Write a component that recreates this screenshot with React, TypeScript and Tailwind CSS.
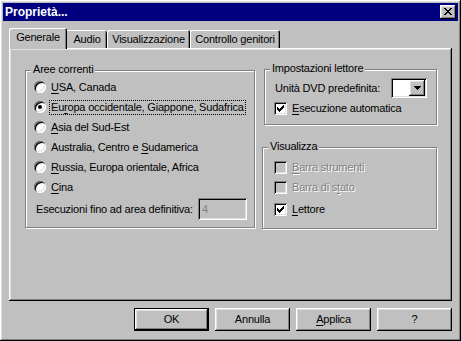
import React from 'react';

const raised =
  'shadow-[inset_-1px_-1px_#000,inset_1px_1px_#fff,inset_-2px_-2px_#808080,inset_2px_2px_#dfdfdf]';
const sunken =
  'shadow-[inset_1px_1px_#808080,inset_-1px_-1px_#fff,inset_2px_2px_#000,inset_-2px_-2px_#dfdfdf]';
const groupBox =
  'relative border border-[#808080] shadow-[1px_1px_0_#fff,inset_1px_1px_0_#fff]';
const disabledText = 'text-[#808080] [text-shadow:1px_1px_0_#fff]';

const Ul: React.FC<{ children: React.ReactNode }> = ({ children }) => (
  <span className="underline underline-offset-[2px]">{children}</span>
);

const Radio: React.FC<{ checked?: boolean }> = ({ checked }) => (
  <div className={`w-[12px] h-[12px] rounded-full bg-white flex items-center justify-center shrink-0 ${sunken}`}>
    {checked && <div className="w-[4px] h-[4px] rounded-full bg-black" />}
  </div>
);

const CheckMark = () => (
  <svg width="7" height="7" viewBox="0 0 7 7" shapeRendering="crispEdges">
    <rect x="0" y="2" width="1" height="3" fill="#000" />
    <rect x="1" y="3" width="1" height="3" fill="#000" />
    <rect x="2" y="4" width="1" height="3" fill="#000" />
    <rect x="3" y="3" width="1" height="3" fill="#000" />
    <rect x="4" y="2" width="1" height="3" fill="#000" />
    <rect x="5" y="1" width="1" height="3" fill="#000" />
    <rect x="6" y="0" width="1" height="3" fill="#000" />
  </svg>
);

const Checkbox: React.FC<{ checked?: boolean; disabled?: boolean }> = ({ checked, disabled }) => (
  <div
    className={`w-[13px] h-[13px] flex items-center justify-center shrink-0 ${sunken} ${
      disabled ? 'bg-[#c0c0c0]' : 'bg-white'
    }`}
  >
    {checked && <CheckMark />}
  </div>
);

const RadioRow: React.FC<{ checked?: boolean; focused?: boolean; children: React.ReactNode }> = ({
  checked,
  focused,
  children,
}) => (
  <div className="h-[20px] flex items-center">
    <Radio checked={checked} />
    <span
      className={`ml-[4px] px-[1px] leading-[13px] ${
        focused ? 'outline outline-1 outline-dotted outline-black' : ''
      }`}
    >
      {children}
    </span>
  </div>
);

const CheckRow: React.FC<{ checked?: boolean; disabled?: boolean; children: React.ReactNode }> = ({
  checked,
  disabled,
  children,
}) => (
  <div className="h-[20px] flex items-center">
    <Checkbox checked={checked} disabled={disabled} />
    <span className={`ml-[5px] ${disabled ? disabledText : ''}`}>{children}</span>
  </div>
);

const Legend: React.FC<{ children: React.ReactNode }> = ({ children }) => (
  <span className="absolute left-[5px] top-[-8px] px-[2px] bg-[#c0c0c0] leading-[13px]">{children}</span>
);

const Button: React.FC<{ isDefault?: boolean; children: React.ReactNode }> = ({ isDefault, children }) => (
  <div className={`w-[75px] h-[23px] ${isDefault ? 'border border-black' : ''}`}>
    <div className={`w-full h-full flex items-center justify-center ${raised}`}>{children}</div>
  </div>
);

export default function App() {
  return (
    <div
      className={`w-[461px] h-[341px] bg-[#c0c0c0] p-[3px] flex flex-col text-[11px] text-black whitespace-nowrap tracking-[-0.2px] ${raised}`}
      style={{ fontFamily: '"Liberation Sans", Arial, sans-serif' }}
    >
      {/* title bar */}
      <div className="h-[18px] bg-[#000080] flex items-center justify-between pl-[2px] pr-[2px]">
        <span className="text-white font-bold text-[12px] tracking-normal">Proprietà...</span>
        <div className={`w-[16px] h-[14px] bg-[#c0c0c0] flex items-center justify-center ${raised}`}>
          <svg width="8" height="7" viewBox="0 0 8 7" shapeRendering="crispEdges" className="-mt-[1px]">
            <path d="M0 0h2v1h-2zM6 0h2v1h-2zM1 1h2v1h-2zM5 1h2v1h-2zM2 2h4v1h-4zM3 3h2v1h-2zM2 4h4v1h-4zM1 5h2v1h-2zM5 5h2v1h-2zM0 6h2v1h-2zM6 6h2v1h-2z" fill="#000" />
          </svg>
        </div>
      </div>

      {/* tabs */}
      <div className="mt-[7px] pl-[6px] h-[20px] flex items-end">
        <div className="relative z-10 w-[58px] h-[21px] -mb-[1px] bg-[#c0c0c0] rounded-tl-[2px] rounded-tr-[2px] shadow-[inset_1px_1px_#fff,inset_-1px_0_#000,inset_-2px_0_#808080] flex items-center justify-center pb-[3px]">
          Generale
        </div>
        <div className="w-[40px] h-[18px] rounded-tr-[2px] shadow-[inset_0_1px_#fff,inset_-1px_0_#000,inset_-2px_0_#808080] flex items-center justify-center">
          Audio
        </div>
        <div className="w-[83px] h-[18px] rounded-t-[2px] shadow-[inset_1px_1px_#fff,inset_-1px_0_#000,inset_-2px_0_#808080] flex items-center justify-center">
          Visualizzazione
        </div>
        <div className="w-[90px] h-[18px] rounded-t-[2px] shadow-[inset_1px_1px_#fff,inset_-1px_0_#000,inset_-2px_0_#808080] flex items-center justify-center">
          Controllo genitori
        </div>
      </div>

      {/* panel */}
      <div className={`ml-[6px] w-[443px] h-[253px] flex pl-[16px] pt-[22px] ${raised}`}>
        <div className={`${groupBox} w-[230px] h-[158px] pl-[8px] pt-[6px] pr-[7px]`}>
          <Legend>Aree correnti</Legend>
          <RadioRow>
            <Ul>U</Ul>SA, Canada
          </RadioRow>
          <RadioRow checked focused>
            Eu<Ul>r</Ul>opa occidentale, Giappone, Sudafrica
          </RadioRow>
          <RadioRow>
            <Ul>A</Ul>sia del Sud-Est
          </RadioRow>
          <RadioRow>
            Australia, Centro e <Ul>S</Ul>udamerica
          </RadioRow>
          <RadioRow>
            <Ul>R</Ul>ussia, Europa orientale, Africa
          </RadioRow>
          <RadioRow>
            <Ul>C</Ul>ina
          </RadioRow>
          <div className="mt-[1px] h-[22px] flex items-center justify-between pl-[2px]">
            <span>Esecuzioni fino ad area definitiva:</span>
            <div className={`w-[49px] h-[22px] bg-[#c0c0c0] flex items-center pl-[4px] text-[#808080] ${sunken}`}>
              4
            </div>
          </div>
        </div>

        <div className="ml-[7px] flex flex-col">
          <div className={`${groupBox} ml-[2px] -mt-[1px] w-[173px] h-[56px] pl-[9px] pr-[9px] pt-[8px]`}>
            <Legend>Impostazioni lettore</Legend>
            <div className="h-[20px] flex items-center justify-between">
              <span className="ml-[1px]">Unità DVD predefinita:</span>
              <div className={`w-[36px] h-[20px] bg-white flex justify-end p-[2px] ${sunken}`}>
                <div className={`w-[16px] h-[16px] bg-[#c0c0c0] flex items-center justify-center ${raised}`}>
                  <svg width="7" height="4" viewBox="0 0 7 4" shapeRendering="crispEdges">
                    <path d="M0 0h7v1h-7zM1 1h5v1h-5zM2 2h3v1h-3zM3 3h1v1h-1z" fill="#000" />
                  </svg>
                </div>
              </div>
            </div>
            <CheckRow checked>
              <Ul>E</Ul>secuzione automatica
            </CheckRow>
          </div>

          <div className={`${groupBox} mt-[22px] w-[175px] h-[82px] pl-[11px] pt-[9px]`}>
            <Legend>Visualizza</Legend>
            <CheckRow disabled>
              <Ul>B</Ul>arra strumenti
            </CheckRow>
            <CheckRow disabled>
              Barra di s<Ul>t</Ul>ato
            </CheckRow>
            <div className="mt-[2px]">
              <CheckRow checked>
                <Ul>L</Ul>ettore
              </CheckRow>
            </div>
          </div>
        </div>
      </div>

      {/* buttons */}
      <div className="mt-[7px] pr-[6px] flex justify-end gap-[6px]">
        <Button isDefault>OK</Button>
        <Button>Annulla</Button>
        <Button>
          <Ul>A</Ul>pplica
        </Button>
        <Button>?</Button>
      </div>
    </div>
  );
}
